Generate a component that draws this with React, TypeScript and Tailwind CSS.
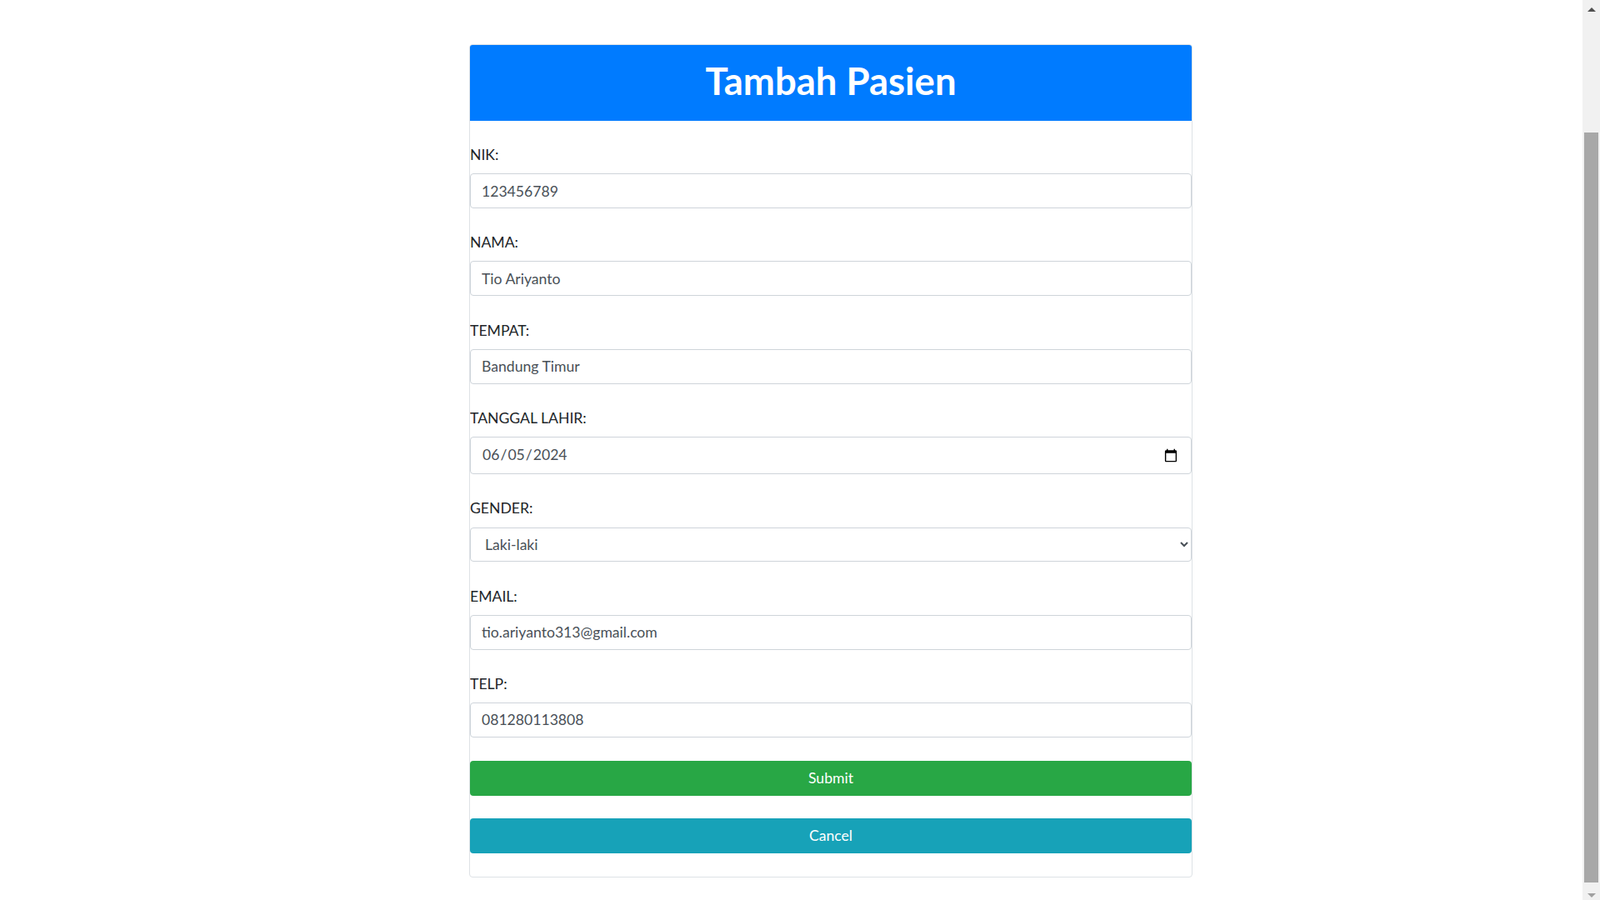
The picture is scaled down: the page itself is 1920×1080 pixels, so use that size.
const inputClass =
  "block w-full h-[41.8px] rounded-[4px] border border-[#ced4da] bg-white px-[13px] text-[17.6px] text-[#495057] outline-none";

const Field = ({ label, children }: { label: string; children: React.ReactNode }) => (
  <div className="mb-[28.3px]">
    <label className="mb-[8.8px] block h-[26.4px] leading-[26.4px]">{label}</label>
    {children}
  </div>
);

// the browser's scrollbar, scrolled to the bottom
const Scrollbar = () => (
  <div className="flex h-screen w-[21px] shrink-0 flex-col bg-[#f1f1f1]">
    <div className="flex h-[21px] items-start justify-center pt-[9px]">
      <div className="h-0 w-0 border-x-[5px] border-b-[5px] border-x-transparent border-b-[#505050]" />
    </div>
    <div className="h-[138px]" />
    <div className="mx-[2px] h-[900px] bg-[#a8a8a8]" />
    <div className="flex flex-1 items-end justify-center pb-[3px]">
      <div className="h-0 w-0 border-x-[5px] border-t-[5px] border-x-transparent border-t-[#a0a0a0]" />
    </div>
  </div>
);

const App = () => {
  return (
    <div className="flex h-screen overflow-hidden bg-white font-['Lato','Open_Sans',sans-serif] text-[17.6px] text-[#212529]">
      <div className="flex-1 pt-[53px]">
        <div className="ml-[563px] w-[868px] overflow-hidden rounded-[4px] border border-[#dee2e6]">
          {/* Header */}
          <h1 className="flex h-[91px] items-center justify-center bg-[#007bff] pb-[4px] text-[45.5px] font-bold text-white">
            Tambah Pasien
          </h1>

          <form className="pt-[28px] pb-[27.5px]">
            <Field label="NIK:">
              <input className={inputClass} defaultValue="123456789" />
            </Field>
            <Field label="NAMA:">
              <input className={inputClass} defaultValue="Tio Ariyanto" />
            </Field>
            <Field label="TEMPAT:">
              <input className={inputClass} defaultValue="Bandung Timur" />
            </Field>
            <Field label="TANGGAL LAHIR:">
              <input
                type="date"
                className="block h-[45px] w-full rounded-[4px] border border-[#ced4da] bg-white px-[13px] text-[17.6px] text-[#495057] outline-none"
                defaultValue="2024-06-05"
              />
            </Field>
            <Field label="GENDER:">
              <select className={inputClass} defaultValue="L">
                <option value="L">Laki-laki</option>
                <option value="P">Perempuan</option>
              </select>
            </Field>
            <Field label="EMAIL:">
              <input className={inputClass} defaultValue="tio.ariyanto313@gmail.com" />
            </Field>
            <Field label="TELP:">
              <input className={inputClass} defaultValue="081280113808" />
            </Field>

            <button
              type="button"
              className="block h-[41.8px] w-full rounded-[4px] bg-[#28a745] text-[17.6px] text-white"
            >
              Submit
            </button>
            <button
              type="button"
              className="mt-[27px] block h-[42.5px] w-full rounded-[4px] bg-[#17a2b8] text-[17.6px] text-white"
            >
              Cancel
            </button>
          </form>
        </div>
      </div>
      <Scrollbar />
    </div>
  );
};

export default App;
